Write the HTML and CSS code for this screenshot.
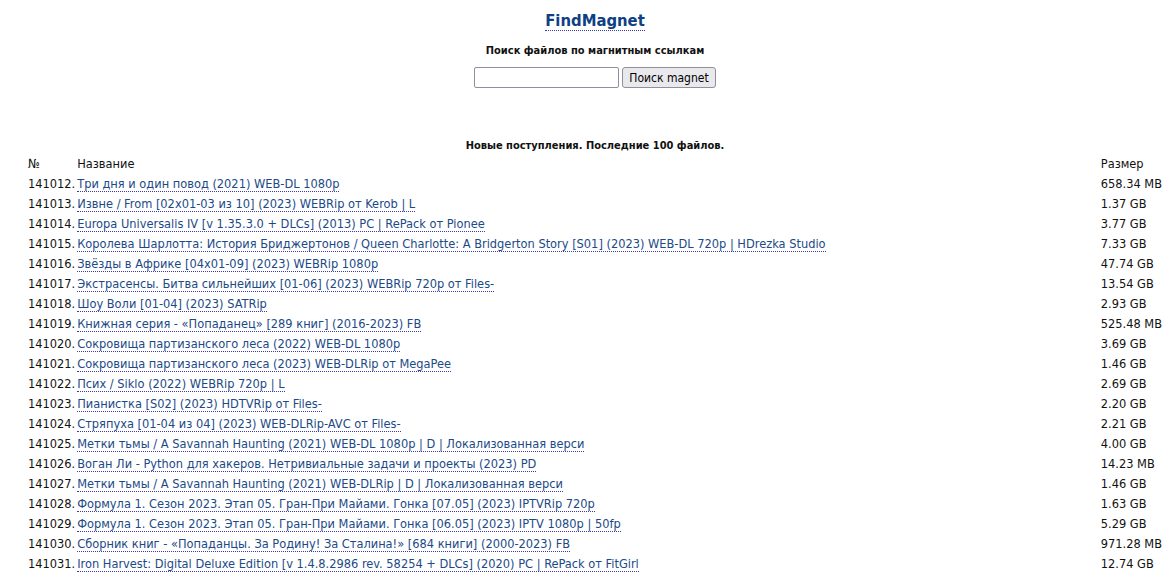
FILE: index.html
```html
<!DOCTYPE html>
<html lang="ru">
<head>
<meta charset="utf-8">
<title>FindMagnet</title>
<link rel="stylesheet" href="styles.css">
</head>
<body>
<div class="page">
<div class="header">
  <h1 class="logo"><a href="#">FindMagnet</a></h1>
  <div class="subtitle">Поиск файлов по магнитным ссылкам</div>
  <form class="search">
    <input type="text" class="search-input">
    <button type="button" class="search-btn">Поиск magnet</button>
  </form>
</div>
<div class="latest">Новые поступления. Последние 100 файлов.</div>
<table class="files">
  <thead>
    <tr><td class="num">№</td><td class="name">Название</td><td class="size">Размер</td></tr>
  </thead>
  <tbody>
    <tr><td class="num">141012.</td><td class="name"><a href="#">Три дня и один повод (2021) WEB-DL 1080p</a></td><td class="size">658.34 MB</td></tr>
    <tr><td class="num">141013.</td><td class="name"><a href="#">Извне / From [02x01-03 из 10] (2023) WEBRip от Kerob | L</a></td><td class="size">1.37 GB</td></tr>
    <tr><td class="num">141014.</td><td class="name"><a href="#">Europa Universalis IV [v 1.35.3.0 + DLCs] (2013) PC | RePack от Pionee</a></td><td class="size">3.77 GB</td></tr>
    <tr><td class="num">141015.</td><td class="name"><a href="#">Королева Шарлотта: История Бриджертонов / Queen Charlotte: A Bridgerton Story [S01] (2023) WEB-DL 720p | HDrezka Studio</a></td><td class="size">7.33 GB</td></tr>
    <tr><td class="num">141016.</td><td class="name"><a href="#">Звёзды в Африке [04x01-09] (2023) WEBRip 1080p</a></td><td class="size">47.74 GB</td></tr>
    <tr><td class="num">141017.</td><td class="name"><a href="#">Экстрасенсы. Битва сильнейших [01-06] (2023) WEBRip 720p от Files-</a></td><td class="size">13.54 GB</td></tr>
    <tr><td class="num">141018.</td><td class="name"><a href="#">Шоу Воли [01-04] (2023) SATRip</a></td><td class="size">2.93 GB</td></tr>
    <tr><td class="num">141019.</td><td class="name"><a href="#">Книжная серия - «Попаданец» [289 книг] (2016-2023) FB</a></td><td class="size">525.48 MB</td></tr>
    <tr><td class="num">141020.</td><td class="name"><a href="#">Сокровища партизанского леса (2022) WEB-DL 1080p</a></td><td class="size">3.69 GB</td></tr>
    <tr><td class="num">141021.</td><td class="name"><a href="#">Сокровища партизанского леса (2023) WEB-DLRip от MegaPee</a></td><td class="size">1.46 GB</td></tr>
    <tr><td class="num">141022.</td><td class="name"><a href="#">Псих / Siklo (2022) WEBRip 720p | L</a></td><td class="size">2.69 GB</td></tr>
    <tr><td class="num">141023.</td><td class="name"><a href="#">Пианистка [S02] (2023) HDTVRip от Files-</a></td><td class="size">2.20 GB</td></tr>
    <tr><td class="num">141024.</td><td class="name"><a href="#">Стряпуха [01-04 из 04] (2023) WEB-DLRip-AVC от Files-</a></td><td class="size">2.21 GB</td></tr>
    <tr><td class="num">141025.</td><td class="name"><a href="#">Метки тьмы / A Savannah Haunting (2021) WEB-DL 1080p | D | Локализованная верси</a></td><td class="size">4.00 GB</td></tr>
    <tr><td class="num">141026.</td><td class="name"><a href="#">Воган Ли - Python для хакеров. Нетривиальные задачи и проекты (2023) PD</a></td><td class="size">14.23 MB</td></tr>
    <tr><td class="num">141027.</td><td class="name"><a href="#">Метки тьмы / A Savannah Haunting (2021) WEB-DLRip | D | Локализованная верси</a></td><td class="size">1.46 GB</td></tr>
    <tr><td class="num">141028.</td><td class="name"><a href="#">Формула 1. Сезон 2023. Этап 05. Гран-При Майами. Гонка [07.05] (2023) IPTVRip 720p</a></td><td class="size">1.63 GB</td></tr>
    <tr><td class="num">141029.</td><td class="name"><a href="#">Формула 1. Сезон 2023. Этап 05. Гран-При Майами. Гонка [06.05] (2023) IPTV 1080p | 50fp</a></td><td class="size">5.29 GB</td></tr>
    <tr><td class="num">141030.</td><td class="name"><a href="#">Сборник книг - «Попаданцы. За Родину! За Сталина!» [684 книги] (2000-2023) FB</a></td><td class="size">971.28 MB</td></tr>
    <tr><td class="num">141031.</td><td class="name"><a href="#">Iron Harvest: Digital Deluxe Edition [v 1.4.8.2986 rev. 58254 + DLCs] (2020) PC | RePack от FitGirl</a></td><td class="size">12.74 GB</td></tr>
  </tbody>
</table>
</div>
</body>
</html>
```

FILE: styles.css
```css
body {
  margin: 8px;
  font-family: "DejaVu Sans Condensed", "DejaVu Sans", sans-serif;
  font-size: 12.7px;
  color: #111;
  background: #fff;
}
.page {
  margin: 0 6px 0 20px;
}
a {
  color: #1b4a86;
  text-decoration: none;
  border-bottom: 1px dotted #3a3ab0;
}
.header {
  text-align: center;
}
.logo {
  margin: 2px 0 0;
  font-size: 16.5px;
  line-height: 21px;
  font-weight: bold;
}
.logo a {
  color: #0d4183;
}
.subtitle {
  margin-top: 13px;
  font-weight: bold;
  font-size: 11px;
  line-height: 14px;
}
.search {
  margin-top: 9px;
  display: flex;
  justify-content: center;
  gap: 3px;
}
.search-input {
  width: 139px;
  height: 17px;
  padding: 1px 2px;
  border: 1px solid #8f8f9d;
  border-radius: 2px;
  margin: 0;
}
.search-btn {
  height: 21px;
  padding: 0 6px;
  font-family: inherit;
  font-size: 12px;
  border: 1px solid #8f8f9d;
  border-radius: 3px;
  background: #e9e9ed;
  margin: 0;
}
.latest {
  margin-top: 51px;
  text-align: center;
  font-weight: bold;
  font-size: 11px;
  line-height: 14px;
}
.files {
  margin-top: 0;
  width: 100%;
  border-collapse: collapse;
}
.files td {
  padding: 0 1px;
  height: 20px;
  white-space: nowrap;
  vertical-align: middle;
}
.files td:first-child {
  padding-left: 0;
}
.files td:last-child {
  padding-right: 0;
}
.files .name {
  width: 100%;
}
```
